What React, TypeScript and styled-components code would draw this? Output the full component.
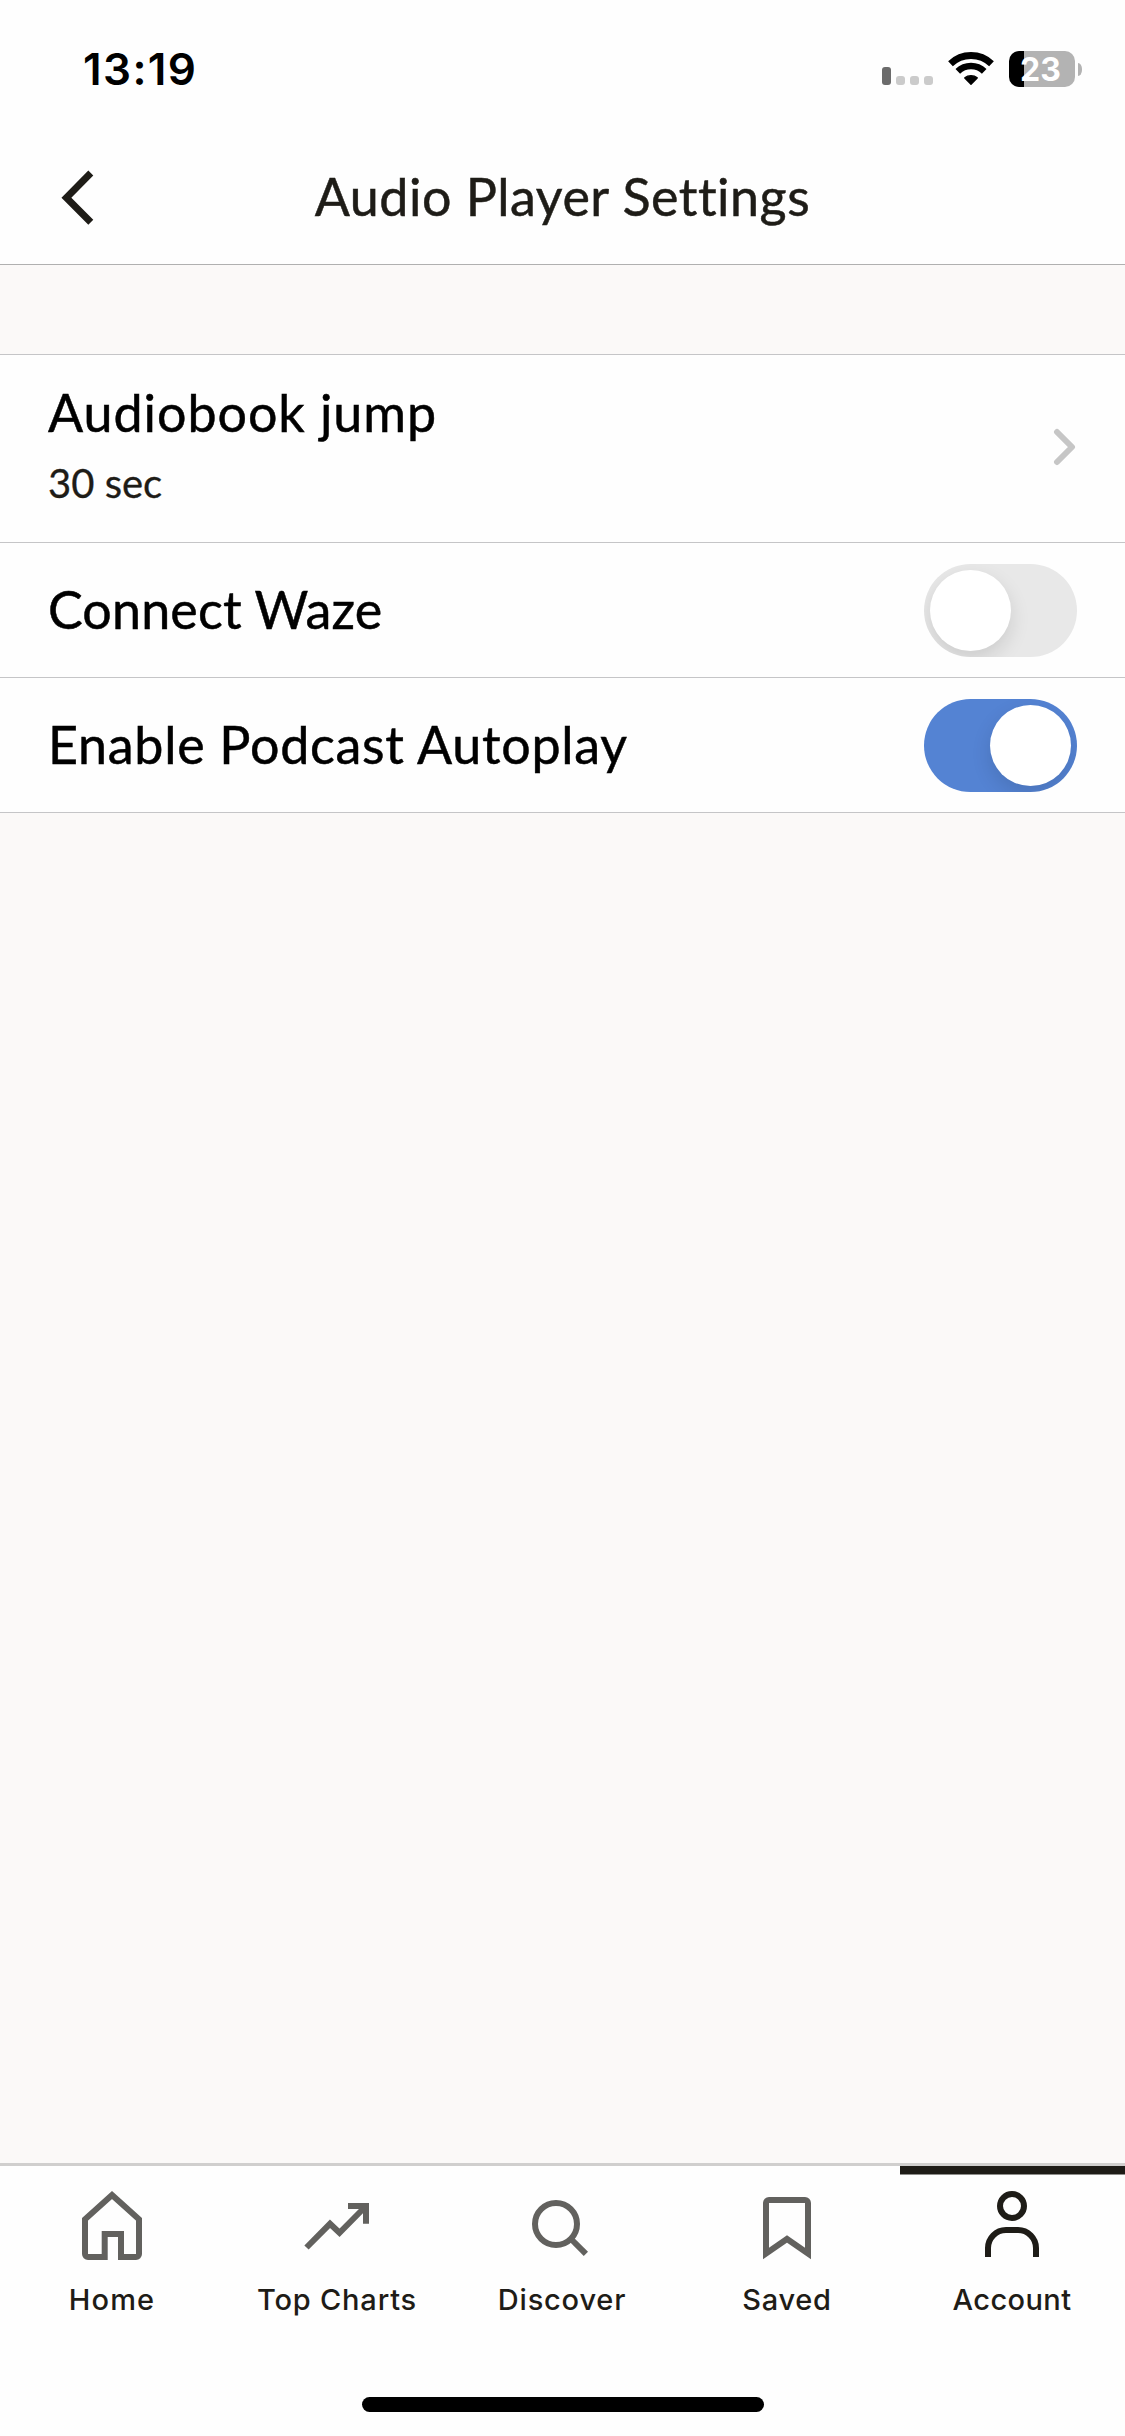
import React, { useState } from "react";
import styled, { createGlobalStyle } from "styled-components";

const ink = "#1e1c17";
const muted = "#62615e";
const divider = "#c5c5c7";
const bodyFont = `Lato, "Open Sans", sans-serif`;
const systemFont = `Inter, Roboto, sans-serif`;

const GlobalStyle = createGlobalStyle`
  * { box-sizing: border-box; }
  body { margin: 0; background: #fefefe; }
  svg { display: block; flex: none; }
  button { margin: 0; padding: 0; border: 0; background: none; cursor: pointer; }
`;

const Screen = styled.div`
  width: 1125px;
  height: 2436px;
  display: flex;
  flex-direction: column;
  overflow: hidden;
  background: #fefefe;
  font-family: ${bodyFont};
`;

/* ---------- Status bar ---------- */

const StatusBar = styled.div`
  flex: none;
  height: 132px;
  padding: 42px 43px 0 82px;
  display: flex;
  justify-content: space-between;
  align-items: flex-start;
  font-family: ${systemFont};
`;

const Time = styled.span`
  padding-left: 1px;
  font-size: 44px;
  line-height: 54px;
  font-weight: 600;
  letter-spacing: 1.4px;
  color: #000;
`;

const StatusIcons = styled.div`
  display: flex;
  gap: 15px;
  padding-top: 9px;
`;

const Signal = styled.div`
  display: flex;
  align-items: flex-end;
  gap: 5px;
  height: 34px;
`;

const SignalBar = styled.span<{ $on?: boolean }>`
  width: 9px;
  height: ${(p) => (p.$on ? 18 : 9)}px;
  border-radius: 3px;
  background: ${(p) => (p.$on ? "#6b6b6b" : "#cbcbcb")};
`;

const Battery = styled.div`
  display: flex;
  align-items: center;
  gap: 3px;
  height: 36px;
`;

const BatteryBody = styled.div`
  width: 66px;
  height: 36px;
  padding: 1px 0 0 11px;
  border-radius: 10px;
  background: linear-gradient(to right, #000 15px, #b3b3b3 15px);
  color: #fff;
  font-size: 32px;
  line-height: 36px;
  font-weight: 700;
  letter-spacing: 0.2px;
`;

const BatteryCap = styled.span`
  width: 4px;
  height: 13px;
  border-radius: 0 4px 4px 0 / 0 6px 6px 0;
  background: #b3b3b3;
`;

/* ---------- Header ---------- */

const Header = styled.header`
  flex: none;
  height: 133px;
  border-bottom: 1px solid #b0b0b0;
  display: grid;
  grid-template-columns: 150px 1fr 150px;
  align-items: center;
`;

const BackButton = styled.button`
  padding-left: 59px;
`;

const Title = styled.h1`
  margin: 0;
  padding-bottom: 4px;
  text-align: center;
  font-size: 52px;
  line-height: 62px;
  font-weight: 400;
  letter-spacing: 0.5px;
  color: ${ink};
  -webkit-text-stroke: 0.5px ${ink};
`;

/* ---------- Settings list ---------- */

const Content = styled.main`
  flex: 1;
  padding-top: 89px;
  background: #fbf9f8;
`;

const List = styled.div`
  border-top: 1px solid ${divider};
`;

const Row = styled.div<{ $tall?: boolean }>`
  height: ${(p) => (p.$tall ? 188 : 135)}px;
  padding: ${(p) => (p.$tall ? 26 : 21)}px 48px 0 48px;
  border-bottom: 1px solid ${divider};
  display: flex;
  justify-content: space-between;
  align-items: flex-start;
  background: #fefefe;
`;

const RowText = styled.div`
  display: flex;
  flex-direction: column;
  gap: 16px;
`;

const Label = styled.span<{ $tracking: number; $lineHeight?: number }>`
  font-size: 52px;
  line-height: ${(p) => p.$lineHeight ?? 62}px;
  letter-spacing: ${(p) => p.$tracking}px;
  color: #000;
  -webkit-text-stroke: 0.5px #000;
`;

const Value = styled.span`
  font-size: 40px;
  line-height: 48px;
  color: ${ink};
  -webkit-text-stroke: 0.3px ${ink};
`;

const Disclosure = styled.div`
  padding-top: 45px;
`;

const Track = styled.button<{ $on: boolean }>`
  width: 153px;
  height: 93px;
  padding: 6px;
  border-radius: 47px;
  display: flex;
  justify-content: ${(p) => (p.$on ? "flex-end" : "flex-start")};
  overflow: hidden;
  background: ${(p) => (p.$on ? "#5483d3" : "#e8e8e8")};
`;

const Knob = styled.span`
  width: 81px;
  height: 81px;
  border-radius: 50%;
  background: #fff;
  box-shadow: 0 8px 20px rgba(0, 0, 0, 0.12);
`;

/* ---------- Tab bar ---------- */

const TabBar = styled.nav`
  flex: none;
  height: 273px;
  border-top: 3px solid #d0cfce;
  display: flex;
  flex-direction: column;
  align-items: center;
`;

const Tabs = styled.div`
  width: 100%;
  height: 231px;
  display: grid;
  grid-template-columns: repeat(5, 1fr);
`;

const Tab = styled.div<{ $active: boolean }>`
  display: flex;
  flex-direction: column;
  align-items: center;
  color: ${(p) => (p.$active ? ink : muted)};
`;

const ActiveMark = styled.span<{ $active: boolean }>`
  width: 100%;
  height: 9px;
  margin-bottom: 15px;
  background: ${(p) => (p.$active ? ink : "transparent")};
  border-bottom: 1px solid ${(p) => (p.$active ? "#8e8d8a" : "transparent")};
`;

const TabLabel = styled.span<{ $tracking: number }>`
  margin-top: 20px;
  padding-right: 1px;
  font-family: ${systemFont};
  font-size: 29px;
  line-height: 35px;
  font-weight: 500;
  letter-spacing: ${(p) => p.$tracking}px;
  white-space: nowrap;
  color: ${ink};
`;

const HomeIndicator = styled.div`
  width: 402px;
  height: 15px;
  margin-left: 1px;
  border-radius: 8px;
  background: #000;
`;

/* ---------- Icons ---------- */

const WifiIcon = () => (
  <svg width="46" height="35" viewBox="0 0 46 35" fill="none" stroke="#000">
    <path d="M2.5 12.8A29.5 29.5 0 0 1 43.5 12.8" strokeWidth="6.8" />
    <path d="M9.8 20.3A19 19 0 0 1 36.2 20.3" strokeWidth="6.6" />
    <path d="M23 33.2L16.8 26.9A9.6 9.6 0 0 1 29.2 26.9Z" fill="#000" strokeWidth="1.4" strokeLinejoin="round" />
  </svg>
);

const BackIcon = () => (
  <svg width="36" height="56" viewBox="0 0 36 56" fill="none" stroke={ink} strokeWidth="7">
    <path d="M31.8 3L7.4 27.7L31.8 52.2" />
  </svg>
);

const ChevronIcon = () => (
  <svg width="24" height="42" viewBox="0 0 24 42" fill="none" stroke="#c6c6c6" strokeWidth="6" strokeLinecap="round" strokeLinejoin="round">
    <path d="M4 6L19 21L4 36" />
  </svg>
);

const TabIcon = ({ children }: { children: React.ReactNode }) => (
  <svg width="73" height="72" viewBox="0 0 73 72" fill="none" stroke="currentColor" strokeWidth="6">
    {children}
  </svg>
);

const HomeShape = () => (
  <path d="M36 5L63 29.3V64a3 3 0 0 1-3 3H45V44H28.7V67H12a3 3 0 0 1-3-3V29.3Z" />
);

const TrendShape = () => (
  <path d="M5.5 57.5L29 33.8L38.5 42.8L65 16M47 16H65V33.7" />
);

const SearchShape = () => (
  <>
    <circle cx="30" cy="34" r="21" />
    <path d="M45 49L59.9 63.9" />
  </>
);

const BookmarkShape = () => (
  <path d="M15 63.5V13a3 3 0 0 1 3-3H54a3 3 0 0 1 3 3V63.5L36 49Z" />
);

const PersonShape = () => (
  <>
    <circle cx="36" cy="16" r="12" />
    <path d="M12 67V58A18 18 0 0 1 30 40H42A18 18 0 0 1 60 58V67" />
  </>
);

const tabs = [
  { name: "Home", tracking: 1.2, Shape: HomeShape },
  { name: "Top Charts", tracking: 0.8, Shape: TrendShape },
  { name: "Discover", tracking: 0.8, Shape: SearchShape },
  { name: "Saved", tracking: 0.7, Shape: BookmarkShape },
  { name: "Account", tracking: 0.4, Shape: PersonShape },
];

const Switch = ({ initial, label }: { initial: boolean; label: string }) => {
  const [on, setOn] = useState(initial);
  return (
    <Track type="button" role="switch" aria-checked={on} aria-label={label} $on={on} onClick={() => setOn(!on)}>
      <Knob />
    </Track>
  );
};

export default function App() {
  return (
    <Screen>
      <GlobalStyle />
      <StatusBar>
        <Time>13:19</Time>
        <StatusIcons>
          <Signal>
            <SignalBar $on />
            <SignalBar />
            <SignalBar />
            <SignalBar />
          </Signal>
          <WifiIcon />
          <Battery>
            <BatteryBody>23</BatteryBody>
            <BatteryCap />
          </Battery>
        </StatusIcons>
      </StatusBar>

      <Header>
        <BackButton type="button" aria-label="Back">
          <BackIcon />
        </BackButton>
        <Title>Audio Player Settings</Title>
      </Header>

      <Content>
        <List>
          <Row $tall>
            <RowText>
              <Label $tracking={0.95}>Audiobook jump</Label>
              <Value>30 sec</Value>
            </RowText>
            <Disclosure>
              <ChevronIcon />
            </Disclosure>
          </Row>
          <Row>
            <Label $tracking={0.15} $lineHeight={90}>Connect Waze</Label>
            <Switch initial={false} label="Connect Waze" />
          </Row>
          <Row>
            <Label $tracking={0.72} $lineHeight={90}>Enable Podcast Autoplay</Label>
            <Switch initial label="Enable Podcast Autoplay" />
          </Row>
        </List>
      </Content>

      <TabBar>
        <Tabs>
          {tabs.map(({ name, tracking, Shape }) => {
            const active = name === "Account";
            return (
              <Tab key={name} $active={active}>
                <ActiveMark $active={active} />
                <TabIcon>
                  <Shape />
                </TabIcon>
                <TabLabel $tracking={tracking}>{name}</TabLabel>
              </Tab>
            );
          })}
        </Tabs>
        <HomeIndicator />
      </TabBar>
    </Screen>
  );
}
